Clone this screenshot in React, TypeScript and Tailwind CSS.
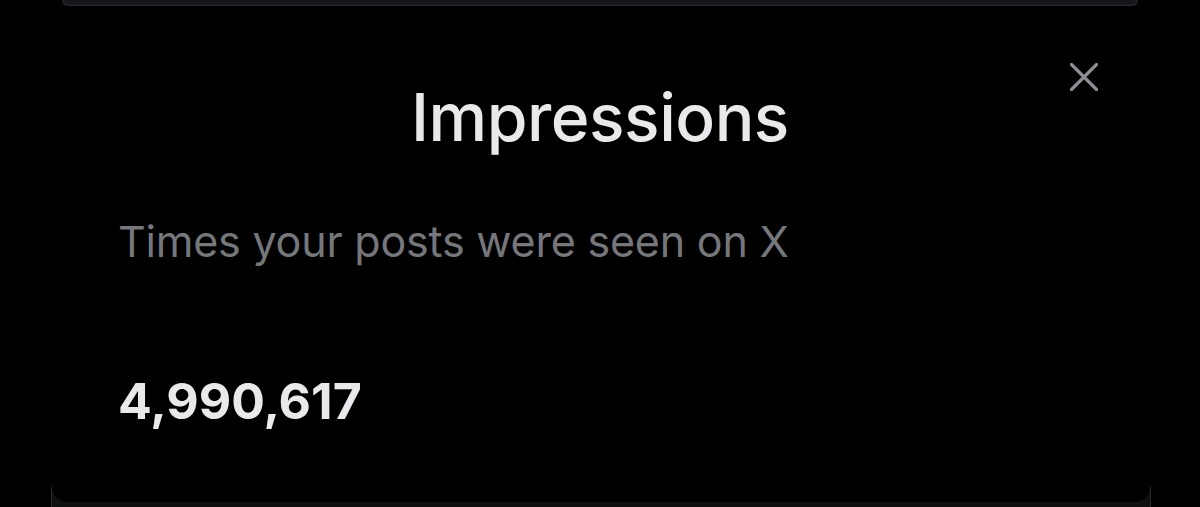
import React from "react";

export default function App() {
  return (
    <div
      className="relative w-[1200px] h-[507px] overflow-hidden bg-black"
      style={{ fontFamily: "Inter, 'Noto Sans', sans-serif" }}
    >
      {/* edge of the card above */}
      <div className="mx-[62px] h-[6px] bg-[#15171a] border-b border-x border-[#2a2c30] rounded-b-[10px]" />

      <button className="absolute left-[1070px] top-[63px] w-[28px] h-[28px] text-[#8b8d90]">
        <svg viewBox="0 0 28 28" width="28" height="28">
          <path d="M1.5 1.5 L26.5 26.5 M26.5 1.5 L1.5 26.5" stroke="currentColor" strokeWidth="3.2" strokeLinecap="round" />
        </svg>
      </button>

      <h2 className="mt-[78px] text-center text-[66px] leading-none font-medium text-[#e7e9ea] tracking-[-0.5px]">
        Impressions
      </h2>

      <div className="pl-[118px]">
        <p className="mt-[70px] text-[43px] leading-none text-[#75777b] tracking-[-0.2px]">
          Times your posts were seen on X
        </p>
        <p className="mt-[113px] text-[50px] leading-none font-bold text-[#e7e9ea]">
          4,990,617
        </p>
      </div>

      {/* card below, peeking out */}
      <div className="absolute left-[51px] top-[487px] w-[1100px] h-[20px] bg-[#0f1012] border-x border-[#2a2c30]">
        <div className="h-[15px] bg-black rounded-b-[16px]" />
      </div>
    </div>
  );
}
